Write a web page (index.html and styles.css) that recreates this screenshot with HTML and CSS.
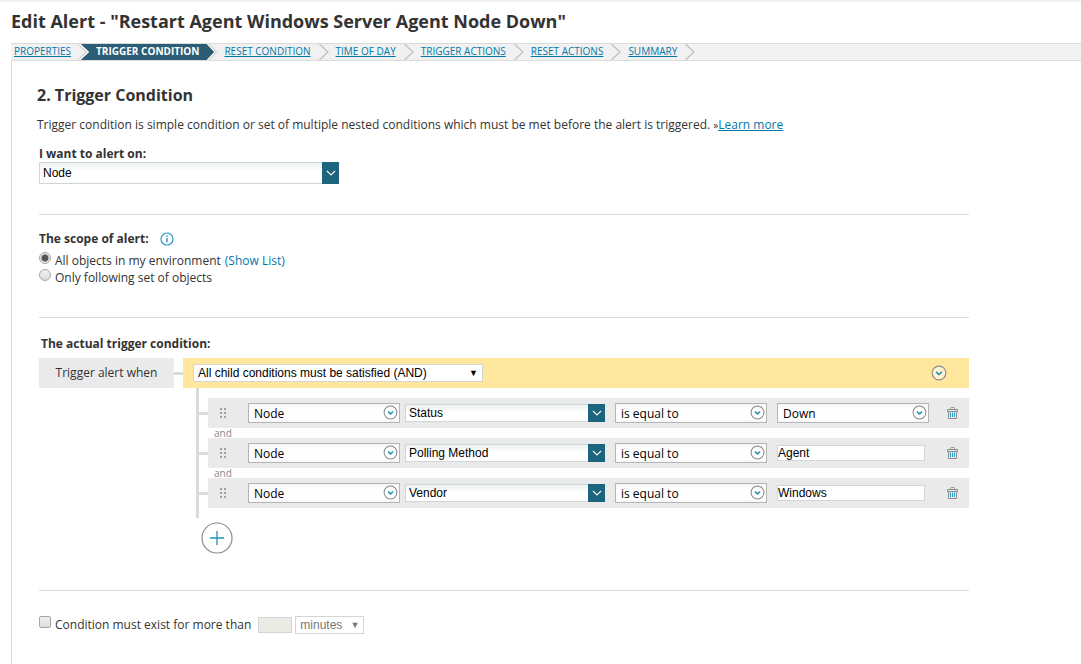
FILE: index.html
```html
<!DOCTYPE html>
<html lang="en">
<head>
    <meta charset="UTF-8">
    <title>Edit Alert</title>
    <link rel="stylesheet" href="styles.css">
</head>
<body>
    <!-- shared icons -->
    <svg class="sprite" aria-hidden="true">
        <symbol id="arrow" viewBox="0 0 10 16">
            <path d="M0.5 0 L9 8 L0.5 16" fill="none" stroke="#bfbfbf" stroke-width="1.2"/>
        </symbol>
        <symbol id="arrow-in" viewBox="0 0 10 16">
            <path d="M1 0 H10 V16 H1 L9.5 8 Z" fill="#2b5d77"/>
            <path d="M0.5 0 L9 8 L0.5 16" fill="none" stroke="#fff" stroke-width="1.6"/>
            <path d="M-1 0 L7.5 8 L-1 16" fill="none" stroke="#bfbfbf" stroke-width="1"/>
        </symbol>
        <symbol id="arrow-out" viewBox="0 0 10 16">
            <path d="M0 0 L7.5 8 L0 16 Z" fill="#2b5d77"/>
            <path d="M0.5 0 L8.2 8 L0.5 16" fill="none" stroke="#fff" stroke-width="1.2"/>
            <path d="M1.8 0 L9.5 8 L1.8 16" fill="none" stroke="#bfbfbf" stroke-width="1"/>
        </symbol>
        <symbol id="round-down" viewBox="0 0 14 14">
            <circle cx="7" cy="7" r="6" fill="#fff" fill-opacity="0.5" stroke="#8c8c8c"/>
            <path d="M4.5 6 L7 8.3 L9.5 6" fill="none" stroke="#1f93b8" stroke-width="1.4"/>
        </symbol>
        <symbol id="chevron" viewBox="0 0 10 6">
            <path d="M1 1 L5 5 L9 1" fill="none" stroke="#fff" stroke-width="1.1"/>
        </symbol>
        <symbol id="trash" viewBox="0 0 11 12">
            <path d="M3.5 2 V1.5 Q3.5 0.5 4.5 0.5 H6.5 Q7.5 0.5 7.5 1.5 V2 M0.5 4.5 V2.5 H10.5 V4.5 Z M1.5 4.5 V11.5 H9.5 V4.5" fill="none" stroke="#8c8c8c"/>
            <path d="M3.5 5.5 V10 M5.5 5.5 V10 M7.5 5.5 V10" stroke="#2a9bc4"/>
        </symbol>
        <symbol id="grip" viewBox="0 0 7 11">
            <path d="M0 0h2v2h-2z M4 0h2v2h-2z M0 4h2v2h-2z M4 4h2v2h-2z M0 8h2v2h-2z M4 8h2v2h-2z" fill="#a0a0a0"/>
        </symbol>
    </svg>

    <h1>Edit Alert - "Restart Agent Windows Server Agent Node Down"</h1>

    <nav class="wizard">
        <a href="#">PROPERTIES</a>
        <svg class="arrow"><use href="#arrow-in"/></svg>
        <a href="#" class="active" aria-current="step">TRIGGER CONDITION</a>
        <svg class="arrow"><use href="#arrow-out"/></svg>
        <a href="#">RESET CONDITION</a>
        <svg class="arrow"><use href="#arrow"/></svg>
        <a href="#">TIME OF DAY</a>
        <svg class="arrow"><use href="#arrow"/></svg>
        <a href="#">TRIGGER ACTIONS</a>
        <svg class="arrow"><use href="#arrow"/></svg>
        <a href="#">RESET ACTIONS</a>
        <svg class="arrow"><use href="#arrow"/></svg>
        <a href="#">SUMMARY</a>
        <svg class="arrow"><use href="#arrow"/></svg>
    </nav>

    <main>
        <h2>2. Trigger Condition</h2>
        <p class="intro">Trigger condition is simple condition or set of multiple nested conditions which must be met before the alert is triggered. <small>»</small><a href="#">Learn more</a></p>

        <section class="alert-on">
            <label class="title" for="alert-on">I want to alert on:</label>
            <div class="combo">
                <select id="alert-on"><option>Node</option></select>
                <span class="combo-button"><svg><use href="#chevron"/></svg></span>
            </div>
        </section>

        <section class="scope">
            <div class="scope-title">
                <h3 class="title">The scope of alert:</h3>
                <svg class="info" viewBox="0 0 14 14">
                    <circle cx="7" cy="7" r="6" fill="none" stroke="#2a9bc4" stroke-width="1.2"/>
                    <path d="M7 3.5 V5 M7 6 V10.5" stroke="#2a9bc4" stroke-width="1.4"/>
                </svg>
            </div>
            <div class="option">
                <input type="radio" name="scope" id="scope-all" checked>
                <label for="scope-all">All objects in my environment</label>
                <a href="#">(Show List)</a>
            </div>
            <div class="option">
                <input type="radio" name="scope" id="scope-set">
                <label for="scope-set">Only following set of objects</label>
            </div>
        </section>

        <section class="conditions">
            <h3 class="title">The actual trigger condition:</h3>
            <div class="root">
                <div class="when">Trigger alert when</div>
                <div class="root-link"></div>
                <div class="group">
                    <div class="plain-select group-select">
                        <select aria-label="Group operator"><option>All child conditions must be satisfied (AND)</option></select>
                        <span>▼</span>
                    </div>
                    <button type="button" class="group-menu" aria-label="Group menu"><svg><use href="#round-down"/></svg></button>
                </div>
            </div>

            <div class="tree">
                <div class="row">
                    <svg class="grip"><use href="#grip"/></svg>
                    <div class="drop">
                        <select aria-label="Object"><option>Node</option></select>
                        <svg><use href="#round-down"/></svg>
                    </div>
                    <div class="combo">
                        <select aria-label="Field"><option>Status</option></select>
                        <span class="combo-button"><svg><use href="#chevron"/></svg></span>
                    </div>
                    <div class="drop">
                        <select aria-label="Operator"><option>is equal to</option></select>
                        <svg><use href="#round-down"/></svg>
                    </div>
                    <div class="drop">
                        <select aria-label="Value"><option>Down</option></select>
                        <svg><use href="#round-down"/></svg>
                    </div>
                    <button type="button" class="delete" aria-label="Delete"><svg><use href="#trash"/></svg></button>
                </div>
                <div class="and">and</div>
                <div class="row">
                    <svg class="grip"><use href="#grip"/></svg>
                    <div class="drop">
                        <select aria-label="Object"><option>Node</option></select>
                        <svg><use href="#round-down"/></svg>
                    </div>
                    <div class="combo">
                        <select aria-label="Field"><option>Polling Method</option></select>
                        <span class="combo-button"><svg><use href="#chevron"/></svg></span>
                    </div>
                    <div class="drop">
                        <select aria-label="Operator"><option>is equal to</option></select>
                        <svg><use href="#round-down"/></svg>
                    </div>
                    <input type="text" class="value" aria-label="Value" value="Agent">
                    <button type="button" class="delete" aria-label="Delete"><svg><use href="#trash"/></svg></button>
                </div>
                <div class="and">and</div>
                <div class="row">
                    <svg class="grip"><use href="#grip"/></svg>
                    <div class="drop">
                        <select aria-label="Object"><option>Node</option></select>
                        <svg><use href="#round-down"/></svg>
                    </div>
                    <div class="combo">
                        <select aria-label="Field"><option>Vendor</option></select>
                        <span class="combo-button"><svg><use href="#chevron"/></svg></span>
                    </div>
                    <div class="drop">
                        <select aria-label="Operator"><option>is equal to</option></select>
                        <svg><use href="#round-down"/></svg>
                    </div>
                    <input type="text" class="value" aria-label="Value" value="Windows">
                    <button type="button" class="delete" aria-label="Delete"><svg><use href="#trash"/></svg></button>
                </div>
            </div>

            <button type="button" class="add" aria-label="Add condition">
                <svg viewBox="0 0 32 32">
                    <circle cx="16" cy="16" r="15" fill="#fff" stroke="#8c8c8c" stroke-width="1.2"/>
                    <path d="M9 16 H23 M16 9 V23" stroke="#1f93b8" stroke-width="1.3"/>
                </svg>
            </button>
        </section>

        <section class="duration">
            <input type="checkbox" id="exist">
            <label for="exist">Condition must exist for more than</label>
            <input type="text" class="amount" aria-label="Amount" disabled>
            <div class="plain-select unit">
                <select aria-label="Unit" disabled><option>minutes</option></select>
                <span>▼</span>
            </div>
        </section>
    </main>
</body>
</html>
```
FILE: styles.css
```css
* {
    box-sizing: border-box;
}
body {
    margin: 0;
    border-top: 2px solid #f1f1f1;
    background-color: #fff;
    color: #333;
    font-family: 'Open Sans', sans-serif;
    font-size: 12px;
    line-height: 17px;
    min-height: 100vh;
    display: flex;
    flex-direction: column;
}
.sprite {
    display: none;
}
svg {
    display: block;
}
a {
    color: #0079aa;
}
select, input, button {
    margin: 0;
    padding: 0;
    border: none;
    border-radius: 0;
    appearance: none;
    font-family: 'Liberation Sans', Arial, sans-serif;
    font-size: 12px;
    color: #000;
}
button {
    background: none;
    cursor: pointer;
}
h1 {
    margin: 7px 0 10px 11px;
    font-size: 18px;
    font-weight: 700;
    line-height: 24px;
}
h2 {
    margin: 0;
    font-size: 16px;
    font-weight: 700;
    line-height: 24px;
}
.title {
    margin: 0;
    font-size: 12px;
    font-weight: 700;
    line-height: 17px;
}

/* wizard steps */
.wizard {
    display: flex;
    height: 18px;
    margin-left: 11px;
    border-top: 1px solid #dbdbdb;
    border-bottom: 1px solid #dbdbdb;
    background-color: #f1f1f1;
    font-size: 10px;
    line-height: 15px;
}
.wizard a {
    padding: 0 8px 0 7px;
}
.wizard a:first-child {
    padding-left: 3px;
}
.wizard .active {
    background-color: #2b5d77;
    color: #fff;
    font-weight: 700;
    text-decoration: none;
}
.arrow {
    width: 10px;
    height: 16px;
}

main {
    flex: 1;
    margin-left: 11px;
    padding: 22px 25px 0;
    border-left: 1px solid #dbdbdb;
}
section {
    max-width: 930px;
    margin-left: 2px;
}
.intro {
    margin: 9px 0 11px;
}
.intro small {
    font-size: 10px;
}

/* combo box with a solid button */
.combo {
    position: relative;
    width: 200px;
    height: 18px;
}
.combo select {
    width: 100%;
    height: 100%;
    padding: 0 20px 0 3px;
    border: 1px solid #d0d5d6;
    background: linear-gradient(#edf1f1, #fff 8px);
}
.combo-button {
    position: absolute;
    top: 0;
    right: 0;
    bottom: 0;
    width: 17px;
    display: flex;
    align-items: center;
    justify-content: center;
    background-color: #1d657f;
    pointer-events: none;
}
.combo-button svg {
    width: 10px;
    height: 6px;
}
.alert-on {
    padding-bottom: 30px;
    border-bottom: 1px solid #dbdbdb;
}
.alert-on .title {
    display: block;
}
.alert-on .combo {
    width: 300px;
    height: 22px;
}

/* scope */
.scope {
    padding: 15px 0 31px;
    border-bottom: 1px solid #dbdbdb;
}
.scope-title {
    display: flex;
    align-items: center;
    gap: 11px;
    margin-bottom: 5px;
}
.info {
    width: 14px;
    height: 14px;
}
.option {
    display: flex;
    gap: 4px;
}
.option a {
    text-decoration: none;
}
input[type="radio"], input[type="checkbox"] {
    width: 12px;
    height: 12px;
    border: 1px solid #a6a6a6;
    background: linear-gradient(#f0f0f0, #dcdcdc);
}
input[type="radio"] {
    border-radius: 50%;
}
input[type="radio"]:checked {
    background: radial-gradient(circle, #555 3px, #e6e6e6 4px);
}
input[type="checkbox"] {
    border-radius: 2px;
}
input[type="checkbox"]:checked {
    background: #555;
}

/* condition builder */
.conditions {
    padding: 17px 0 36px;
    border-bottom: 1px solid #dbdbdb;
}
.conditions .title {
    margin: 0 0 6px 2px;
}
.root {
    display: flex;
    align-items: center;
}
.when {
    width: 135px;
    background-color: #eaeaea;
    line-height: 30px;
    text-align: center;
}
.root-link {
    width: 9px;
    height: 3px;
    background-color: #dbdbdb;
}
.group {
    flex: 1;
    display: flex;
    align-items: center;
    justify-content: space-between;
    height: 30px;
    padding: 0 22px 0 10px;
    background-color: #ffe79e;
}
.plain-select {
    position: relative;
    height: 18px;
}
.plain-select select {
    width: 100%;
    height: 100%;
    padding-left: 4px;
    border: 1px solid #d5d5d5;
    background-color: #fff;
}
.plain-select span {
    position: absolute;
    top: 0;
    right: 5px;
    color: #000;
    font-size: 9px;
    line-height: 18px;
    pointer-events: none;
}
.group-select {
    width: 290px;
}
.group-menu svg {
    width: 16px;
    height: 16px;
}
.tree {
    margin-left: 157px;
    padding: 10px 0;
    border-left: 3px solid #dbdbdb;
}
.row {
    position: relative;
    display: flex;
    align-items: center;
    height: 30px;
    margin-left: 9px;
    background-color: #eaeaea;
}
.row::before {
    content: '';
    position: absolute;
    top: 14px;
    left: -9px;
    width: 9px;
    height: 3px;
    background-color: #dbdbdb;
}
.grip {
    width: 7px;
    height: 11px;
    margin: 0 21px 0 12px;
}
.drop {
    position: relative;
    width: 152px;
    height: 20px;
}
.drop select {
    width: 100%;
    height: 100%;
    padding-left: 5px;
    border: 1px solid #b5b5b5;
    background: linear-gradient(#f5f5f5, #fff 6px, #fff 14px, #f7f7f7);
    font-family: 'Open Sans', sans-serif;
}
.drop svg {
    position: absolute;
    top: 2px;
    right: 2px;
    width: 15px;
    height: 15px;
    pointer-events: none;
}
.row .combo {
    margin: 0 10px 0 5px;
}
.combo + .drop {
    margin-right: 10px;
}
.value {
    width: 148px;
    height: 16px;
    margin-right: 4px;
    border: 1px solid #d5d5d5;
    background-color: #fff;
}
.delete {
    margin-left: 18px;
}
.delete svg {
    width: 11px;
    height: 12px;
}
.and {
    height: 10px;
    margin-left: 15px;
    color: #888;
    font-size: 10px;
    line-height: 10px;
}
.add {
    display: block;
    margin: 4px 0 0 162px;
}
.add svg {
    width: 32px;
    height: 32px;
}

/* duration */
.duration {
    display: flex;
    align-items: flex-start;
    padding-top: 25px;
}
.duration label {
    margin: 0 7px 0 4px;
}
.amount {
    width: 34px;
    height: 16px;
    margin: 1px 3px 0 0;
    border: 1px solid #d5d5d5;
    background-color: #ebebe4;
}
.unit {
    width: 69px;
}
.unit select, .unit span {
    color: #777;
    opacity: 1;
}
```
